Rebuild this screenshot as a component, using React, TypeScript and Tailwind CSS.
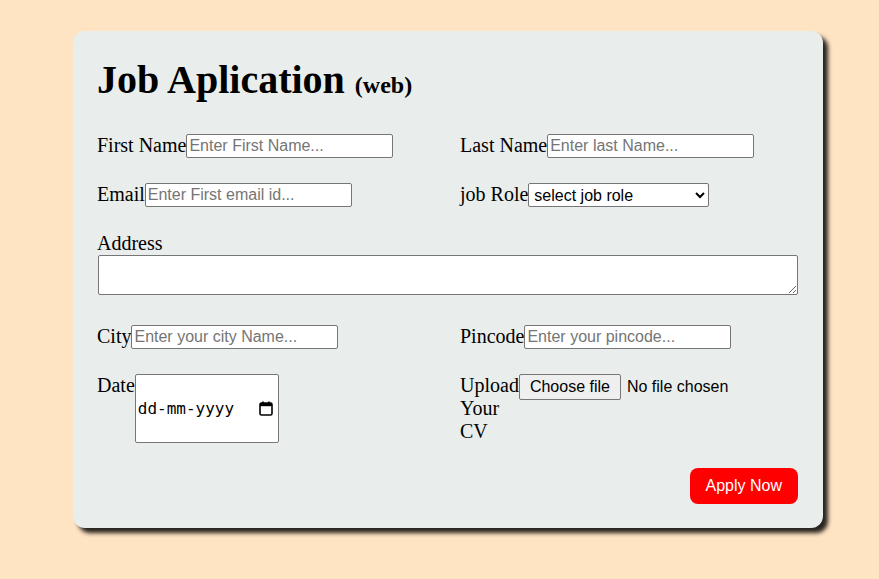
import React from "react";

const inputCls =
  "h-[24px] w-[207px] shrink-0 rounded-[2px] border border-[#767676] bg-white px-[2px] py-[1px] font-['Liberation_Sans',Arial,sans-serif] text-[16px] leading-[18px] text-black placeholder:text-[#757575] outline-none";

function Field({ label, placeholder }: { label: string; placeholder: string }) {
  return (
    <label className="flex items-start leading-[23px]">
      <span className="shrink-0">{label}</span>
      <input type="text" placeholder={placeholder} className={inputCls} />
    </label>
  );
}

export default function App() {
  return (
    <div className="min-h-screen bg-[#ffe4c4] pt-[31px] pl-[73px] font-['Liberation_Serif','Times_New_Roman',serif] text-[20px] text-black">
      <div className="w-[750px] rounded-[12px] bg-[#e9eeec] p-6 shadow-[5px_5px_4px_rgba(0,0,0,0.85)]">
        <h1 className="mt-[2px] text-[40px] font-bold leading-[46px]">
          Job Aplication <span className="text-[24px] leading-none">(web)</span>
        </h1>

        <div className="mt-[31px] grid grid-cols-2 gap-x-6 gap-y-[25px]">
          <Field label="First Name" placeholder="Enter First Name..." />
          <Field label="Last Name" placeholder="Enter last Name..." />
          <Field label="Email" placeholder="Enter First email id..." />
          <label className="flex items-start leading-[23px]">
            <span className="shrink-0">job Role</span>
            <select
              defaultValue=""
              className="h-[24px] w-[181px] rounded-[2px] border border-[#767676] bg-white pl-[1px] font-['Liberation_Sans',Arial,sans-serif] text-[16px] text-black"
            >
              <option value="">select job role</option>
              <option>Frontend Developer</option>
              <option>Backend Developer</option>
              <option>Full Stack Developer</option>
            </select>
          </label>
        </div>

        <div className="mt-[25px]">
          <label className="block leading-[23px]">Address</label>
          <textarea className="ml-px block h-[40px] w-[700px] rounded-[2px] border border-[#767676] bg-white" />
        </div>

        <div className="mt-[30px] grid grid-cols-2 gap-x-6 gap-y-[25px]">
          <Field label="City" placeholder="Enter your city Name..." />
          <Field label="Pincode" placeholder="Enter your pincode..." />
          <label className="flex items-start leading-[23px]">
            <span className="shrink-0">Date</span>
            <div className="flex h-[69px] w-[144px] shrink-0 items-center justify-between rounded-[2px] border border-[#767676] bg-white pl-[2px] pr-[5px]">
              <span className="font-['DejaVu_Sans_Mono',monospace] text-[16px] leading-[19px]">dd-mm-yyyy</span>
              <svg width="14" height="15" viewBox="0 0 14 15" className="shrink-0">
                <rect x="1" y="2" width="12" height="12" rx="1.5" fill="none" stroke="#000" strokeWidth="1.6" />
                <rect x="1" y="2" width="12" height="3.2" fill="#000" />
                <rect x="3.2" y="0.5" width="1.6" height="2.5" fill="#000" />
                <rect x="9.2" y="0.5" width="1.6" height="2.5" fill="#000" />
              </svg>
            </div>
          </label>
          <label className="flex items-start leading-[23px]">
            <span className="w-min shrink-0">Upload Your CV</span>
            <div className="flex items-center font-['Liberation_Sans',Arial,sans-serif] text-[16px]">
              <span className="flex h-[26px] items-center rounded-[2px] border border-[#767676] bg-[#efefef] px-[10px] leading-[18px]">
                Choose file
              </span>
              <span className="ml-[6px] leading-[18px]">No file chosen</span>
            </div>
          </label>
        </div>

        <div className="mt-[25px] flex justify-end pr-px">
          <button className="h-[36px] rounded-[8px] bg-[#ff0000] px-[16px] font-['Liberation_Sans',Arial,sans-serif] text-[16px] text-white">
            Apply Now
          </button>
        </div>
      </div>
    </div>
  );
}
